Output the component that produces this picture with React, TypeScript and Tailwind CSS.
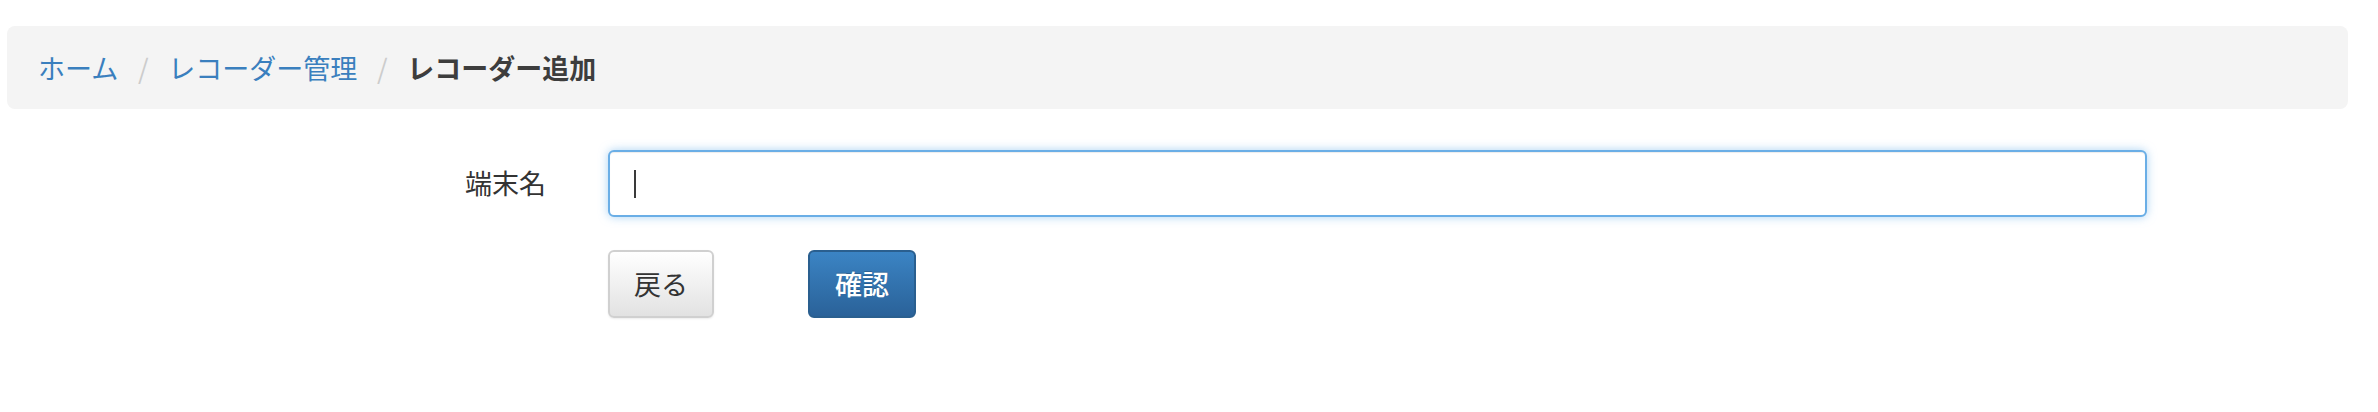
import { useState } from 'react';

const FONT = "font-['Noto_Sans_CJK_JP','Noto_Sans',sans-serif]";

type Crumb = { label: string; href?: string };

const crumbs: Crumb[] = [
    { label: 'ホーム', href: '#' },
    { label: 'レコーダー管理', href: '#' },
    { label: 'レコーダー追加' },
];

const Breadcrumb = () => (
    <ol className="ml-[7px] mr-[30px] flex h-[83px] items-center rounded-[8px] bg-[#f4f4f4] pl-[31px] text-[27px] leading-none">
        {crumbs.map((c, idx) => (
            <li key={c.label} className="flex items-center">
                {idx > 0 && <span className="w-[50px] text-center text-[#cccccc]">/</span>}
                {c.href ? (
                    <a href={c.href} className="text-[#3a7fbe]">
                        {c.label}
                    </a>
                ) : (
                    <span className="font-bold text-[#3d3d3d]">{c.label}</span>
                )}
            </li>
        ))}
    </ol>
);

export default function App() {
    const [name, setName] = useState('');

    return (
        <div className={`min-h-screen bg-white pt-[26px] ${FONT}`}>
            <Breadcrumb />

            <form className="mt-[41px]" onSubmit={(e) => e.preventDefault()}>
                <div className="flex items-center">
                    <label htmlFor="terminal-name" className="w-[546px] text-right text-[27px] text-[#333333]">
                        端末名
                    </label>
                    <div className="relative ml-[62px] w-[1539px]">
                        <input
                            id="terminal-name"
                            type="text"
                            value={name}
                            onChange={(e) => setName(e.target.value)}
                            className="block h-[67px] w-full rounded-[6px] border-2 border-[#6aaee6] bg-white px-[25px] text-[27px] text-[#333] caret-transparent outline-none shadow-[inset_0_1px_1px_rgba(0,0,0,0.075),0_0_10px_rgba(102,175,233,0.55)]"
                        />
                        {name === '' && (
                            <span className="pointer-events-none absolute left-[26px] top-[20px] h-[28px] w-[2px] bg-[#3a3a3a]" />
                        )}
                    </div>
                </div>

                <div className="ml-[608px] mt-[33px] flex gap-[94px]">
                    <button
                        type="button"
                        className="h-[68px] w-[106px] rounded-[6px] border-2 border-[#d0d0d0] bg-gradient-to-b from-white to-[#e2e2e2] text-[27px] text-[#333] shadow-[0_1px_2px_rgba(0,0,0,0.08)]"
                    >
                        戻る
                    </button>
                    <button
                        type="submit"
                        className="h-[68px] w-[108px] rounded-[6px] border-2 border-[#2a5f8f] bg-gradient-to-b from-[#3b84c4] to-[#2a6299] text-[27px] font-medium text-white [text-shadow:0_-1px_0_rgba(0,0,0,0.2)]"
                    >
                        確認
                    </button>
                </div>
            </form>
        </div>
    );
}
